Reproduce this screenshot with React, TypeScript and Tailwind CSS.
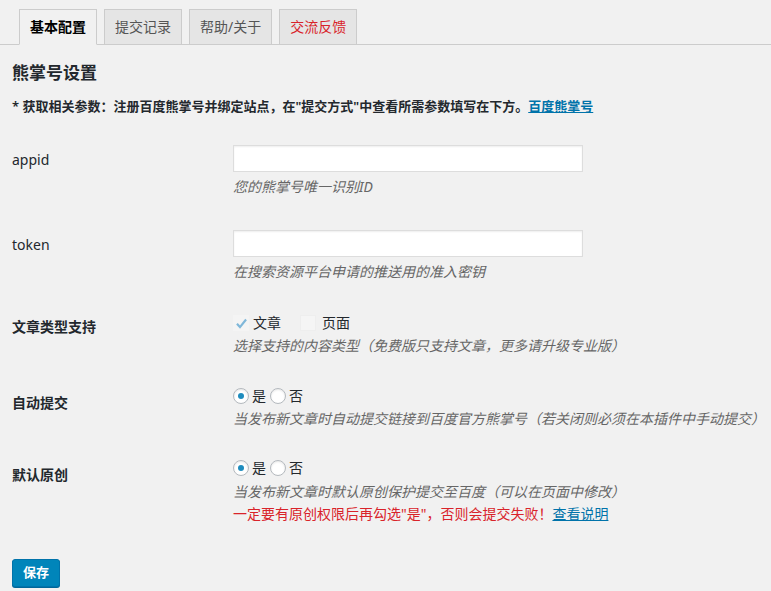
import { useState } from "react";

const font = { fontFamily: '"Noto Sans", "Noto Sans CJK SC", sans-serif' };

function Radio({ checked, onClick }: { checked: boolean; onClick: () => void }) {
    return (
        <span
            onClick={onClick}
            className="w-4 h-4 rounded-full bg-white border border-[#b4b9be] shadow-[inset_0_1px_2px_rgba(0,0,0,0.1)] flex items-center justify-center cursor-pointer"
        >
            {checked && <span className="w-[6px] h-[6px] rounded-full bg-[#1e8cbe]" />}
        </span>
    );
}

function Row({ label, labelTop = "pt-[20px]", weight = "font-semibold", bottom, children }: { label: string; labelTop?: string; weight?: string; bottom: string; children: React.ReactNode }) {
    return (
        <div className="grid grid-cols-[221px_1fr]">
            <div className={`${labelTop} ${weight} text-[14px] leading-[20px] text-[#23282d]`}>{label}</div>
            <div className={`pt-[15px] ${bottom}`}>{children}</div>
        </div>
    );
}

function App() {
    const [tab, setTab] = useState(0);
    const [appid, setAppid] = useState("");
    const [token, setToken] = useState("");
    const [post, setPost] = useState(true);
    const [page, setPage] = useState(false);
    const [auto, setAuto] = useState(true);
    const [orig, setOrig] = useState(true);

    const tabs = ["基本配置", "提交记录", "帮助/关于", "交流反馈"];

    return (
        <div className="min-h-[591px] bg-[#f1f1f1] text-[#23282d]" style={font}>
            <div className="pt-[9px] pl-[19px] flex border-b border-[#ccc]">
                {tabs.map((t, i) => (
                    <div
                        key={t}
                        onClick={() => setTab(i)}
                        className={
                            "-mb-px h-[36px] px-[10px] pt-[5px] text-[14px] leading-[24px] border border-[#ccc] cursor-pointer " +
                            (i > 0 ? "ml-[7px] " : "") +
                            (i === tab ? "bg-[#f1f1f1] border-b-[#f1f1f1] font-semibold text-[#000] " : "bg-[#e5e5e5] ") +
                            (i === 3 ? "text-[#d9232a]" : i === tab ? "" : "text-[#555]")
                        }
                    >
                        {t}
                    </div>
                ))}
            </div>

            <div className="px-[12px]">
                <h2 className="mt-[16px] text-[17px] leading-[24px] font-semibold">熊掌号设置</h2>
                <p className="mt-[11px] text-[13px] leading-[20px] font-semibold">
                    * 获取相关参数：注册百度熊掌号并绑定站点，在"提交方式"中查看所需参数填写在下方。
                    <a href="#" className="text-[#0073aa] underline">百度熊掌号</a>
                </p>

                <div className="mt-[14px]">
                    <Row label="appid" weight="font-normal" bottom="pb-[18px]">
                        <input
                            value={appid}
                            onChange={(e) => setAppid(e.target.value)}
                            className="block w-[350px] h-[27px] bg-white border border-[#ddd] shadow-[inset_0_1px_2px_rgba(0,0,0,0.07)] px-2 text-[14px] outline-none"
                        />
                        <p className="mt-[5px] text-[14px] leading-[20px] italic text-[#666]">您的熊掌号唯一识别ID</p>
                    </Row>

                    <Row label="token" weight="font-normal" bottom="pb-[18px]">
                        <input
                            value={token}
                            onChange={(e) => setToken(e.target.value)}
                            className="block w-[350px] h-[27px] bg-white border border-[#ddd] shadow-[inset_0_1px_2px_rgba(0,0,0,0.07)] px-2 text-[14px] outline-none"
                        />
                        <p className="mt-[5px] text-[14px] leading-[20px] italic text-[#666]">在搜索资源平台申请的推送用的准入密钥</p>
                    </Row>

                    <Row label="文章类型支持" labelTop="pt-[17px]" bottom="pb-[17px]">
                        <div className="flex items-center h-4 text-[14px] leading-[16px]">
                            <span
                                onClick={() => setPost(!post)}
                                className="w-4 h-4 flex items-center justify-center bg-[#f4f4f4] cursor-pointer"
                            >
                                {post && (
                                    <svg width="13" height="13" viewBox="0 0 12 12">
                                        <path d="M1.8 6.3 L4.6 9.3 L10.2 2.3" fill="none" stroke="#7fb7d9" strokeWidth="2" />
                                    </svg>
                                )}
                            </span>
                            <span className="ml-[4px]">文章</span>
                            <span
                                onClick={() => setPage(!page)}
                                className="ml-[19px] w-4 h-4 bg-[#f5f5f5] border border-[#eee] cursor-pointer"
                            />
                            <span className="ml-[6px]">页面</span>
                        </div>
                        <p className="mt-[5px] text-[14px] leading-[20px] italic text-[#666]">选择支持的内容类型（免费版只支持文章，更多请升级专业版）</p>
                    </Row>

                    <Row label="自动提交" bottom="pb-[16px]">
                        <div className="flex items-center h-4 text-[14px] leading-[16px]">
                            <Radio checked={auto} onClick={() => setAuto(true)} />
                            <span className="ml-[3px] mr-[4px]">是</span>
                            <Radio checked={!auto} onClick={() => setAuto(false)} />
                            <span className="ml-[3px]">否</span>
                        </div>
                        <p className="mt-[5px] text-[14px] leading-[20px] italic text-[#666]">当发布新文章时自动提交链接到百度官方熊掌号（若关闭则必须在本插件中手动提交）</p>
                    </Row>

                    <Row label="默认原创" bottom="pb-[15px]">
                        <div className="flex items-center h-4 text-[14px] leading-[16px]">
                            <Radio checked={orig} onClick={() => setOrig(true)} />
                            <span className="ml-[3px] mr-[4px]">是</span>
                            <Radio checked={!orig} onClick={() => setOrig(false)} />
                            <span className="ml-[3px]">否</span>
                        </div>
                        <p className="mt-[6px] text-[14px] leading-[20px] italic text-[#666]">当发布新文章时默认原创保护提交至百度（可以在页面中修改）</p>
                        <p className="mt-[2px] text-[14px] leading-[20px] text-[#d9232a]">
                            一定要有原创权限后再勾选"是"，否则会提交失败！
                            <a href="#" className="text-[#0073aa] underline">查看说明</a>
                        </p>
                    </Row>
                </div>

                <button className="mt-[20px] h-[28px] px-[10px] bg-[#0085ba] border border-[#0073aa] rounded-[3px] shadow-[0_1px_0_#006799] text-white text-[13px] font-semibold">
                    保存
                </button>
            </div>
        </div>
    );
}

export default App;
